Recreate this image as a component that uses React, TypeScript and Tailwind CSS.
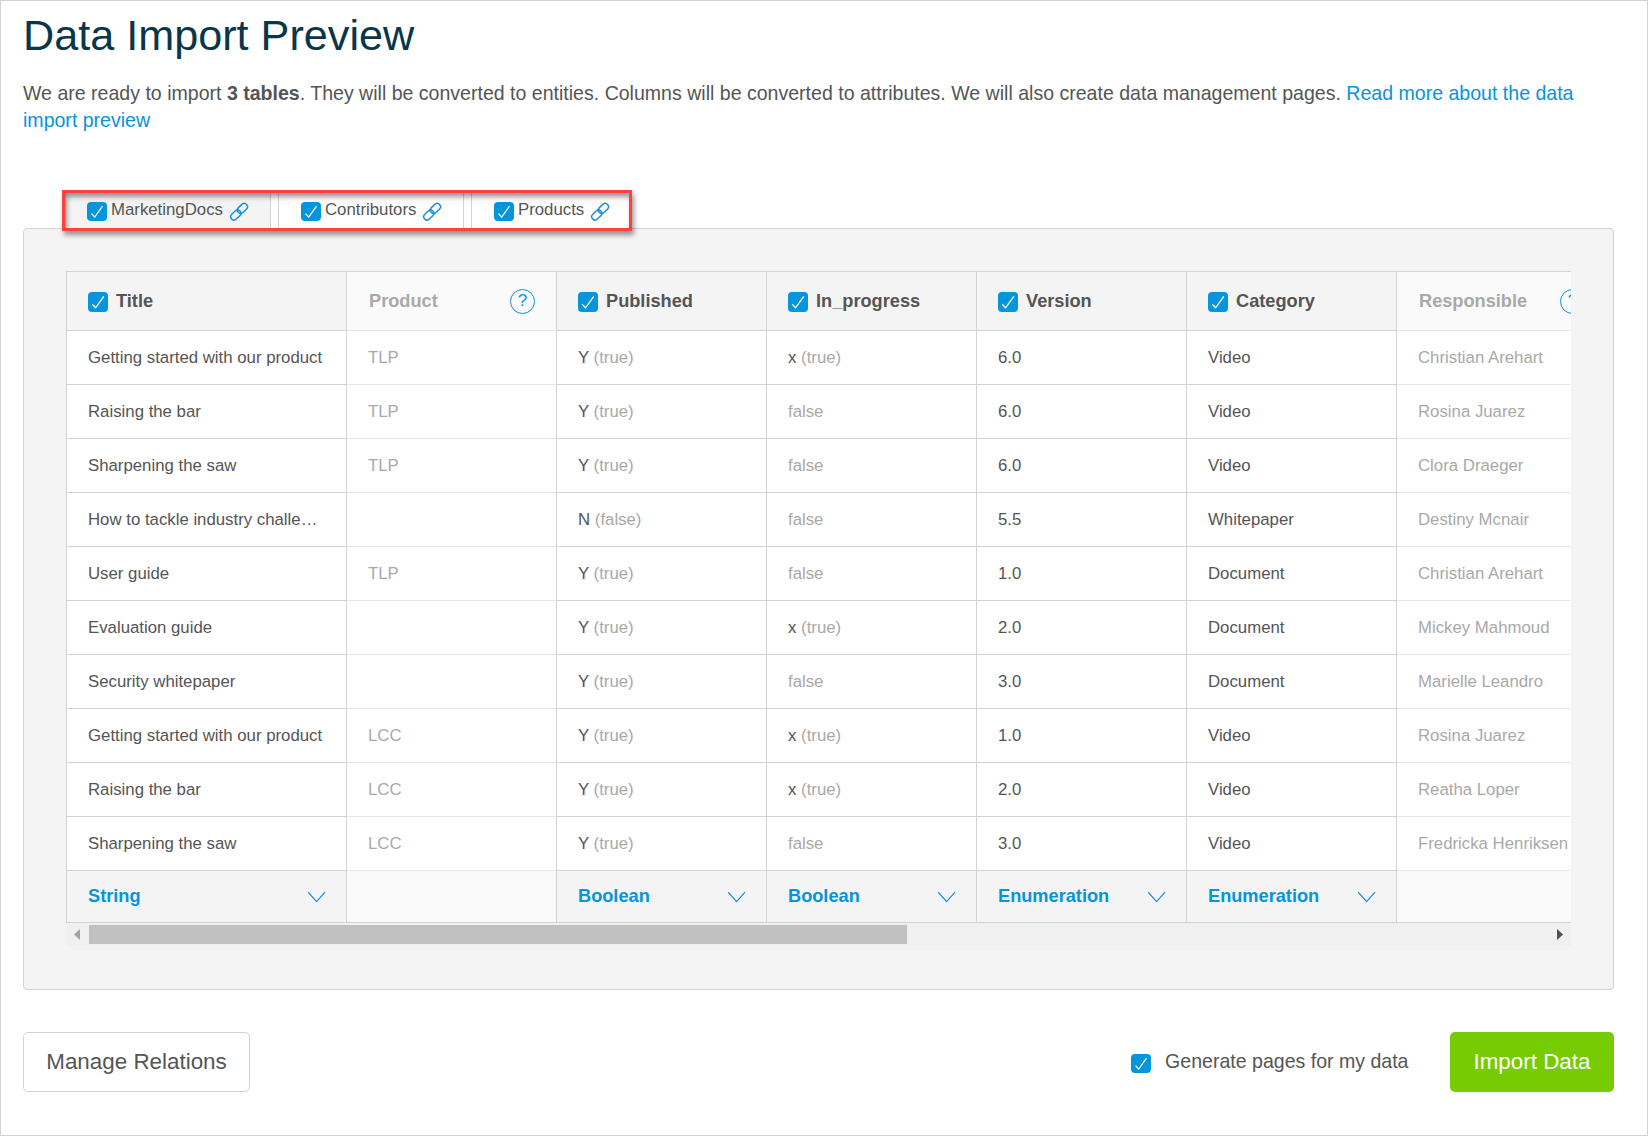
import React from "react";

type Cell = string | [string, string];

const columns = [
  { name: "Title", type: "String", on: true },
  { name: "Product", type: "", on: false },
  { name: "Published", type: "Boolean", on: true },
  { name: "In_progress", type: "Boolean", on: true },
  { name: "Version", type: "Enumeration", on: true },
  { name: "Category", type: "Enumeration", on: true },
  { name: "Responsible", type: "", on: false },
];

const Y: Cell = ["Y", "(true)"];
const N: Cell = ["N", "(false)"];
const X: Cell = ["x", "(true)"];
const F: Cell = ["", "false"];

const rows: Cell[][] = [
  ["Getting started with our product", "TLP", Y, X, "6.0", "Video", "Christian Arehart"],
  ["Raising the bar", "TLP", Y, F, "6.0", "Video", "Rosina Juarez"],
  ["Sharpening the saw", "TLP", Y, F, "6.0", "Video", "Clora Draeger"],
  ["How to tackle industry challe…", "", N, F, "5.5", "Whitepaper", "Destiny Mcnair"],
  ["User guide", "TLP", Y, F, "1.0", "Document", "Christian Arehart"],
  ["Evaluation guide", "", Y, X, "2.0", "Document", "Mickey Mahmoud"],
  ["Security whitepaper", "", Y, F, "3.0", "Document", "Marielle Leandro"],
  ["Getting started with our product", "LCC", Y, X, "1.0", "Video", "Rosina Juarez"],
  ["Raising the bar", "LCC", Y, X, "2.0", "Video", "Reatha Loper"],
  ["Sharpening the saw", "LCC", Y, F, "3.0", "Video", "Fredricka Henriksen"],
];

const GRID = "grid w-[1540px] grid-cols-[280px_repeat(6,210px)]";

function Check({ className = "" }: { className?: string }) {
  return (
    <span className={`block w-5 shrink-0 rounded-[4px] bg-[#0595db] ${className}`}>
      <svg viewBox="0 0 20 20" className="block h-full w-full" fill="none" stroke="#fff" strokeWidth="1.3">
        <path d="M4.2 12.2 7.6 15.8 15.8 4.4" />
      </svg>
    </span>
  );
}

function LinkIcon() {
  return (
    <svg width="20" height="20" viewBox="0 0 20 20" fill="none" stroke="#1a8fdb" strokeWidth="1.5">
      <rect x="-5.7" y="-3.3" width="11.4" height="6.6" rx="3.3" transform="translate(13.4 6.4) rotate(-43)" />
      <rect x="-5.7" y="-3.3" width="11.4" height="6.6" rx="3.3" transform="translate(6.8 13) rotate(-43)" />
    </svg>
  );
}

function Help() {
  return (
    <span className="flex size-[25px] shrink-0 items-center justify-center rounded-full border border-[#0595db] pb-[2px] text-[17px] leading-none text-[#0595db]">
      ?
    </span>
  );
}

function Chevron() {
  return (
    <svg className="mt-px" width="18" height="12" viewBox="0 0 18 12" fill="none" stroke="#1a8fdb" strokeWidth="1.2">
      <path d="M.2 1.2 8.600 10.600 17 1.200" />
    </svg>
  );
}

function Tab({ label, className }: { label: string; className: string }) {
  return (
    <div className={`flex h-[37px] border-x border-t border-[#d3d3d3] ${className}`}>
      <Check className="mt-[10px] h-[19px]" />
      <span className="ml-[4px] mt-[6px] text-[16.8px] leading-6">{label}</span>
      <span className="ml-[6px] mt-[10px]">
        <LinkIcon />
      </span>
    </div>
  );
}

function Value({ cell }: { cell: Cell }) {
  if (typeof cell === "string") return <>{cell}</>;
  return (
    <>
      {cell[0]}
      {cell[0] && " "}
      <span className="text-[#a9a9a9]">{cell[1]}</span>
    </>
  );
}

export default function App() {
  return (
    <div className="h-[1136px] w-[1648px] overflow-hidden border border-[#d3d3d3] bg-white pl-[22px] pr-[33px] font-['Liberation_Sans',Arial,sans-serif] text-[#555]">
      <h1 className="mt-[9px] h-[50px] text-[43.2px] leading-[50px] text-[#0a3649]">Data Import Preview</h1>
      <p className="mt-[20px] h-[54px] text-[19.56px] leading-[27px]">
        We are ready to import <b>3 tables</b>. They will be converted to entities. Columns will be converted to
        attributes. We will also create data management pages.{" "}
        <a className="text-[#0595db]">Read more about the data import preview</a>
      </p>

      <div className="relative z-10 ml-[39px] mt-[56px] flex h-[41px] w-[570px] pl-[3px] pt-px">
        <Tab label="MarketingDocs" className="w-[206px] bg-[#f4f4f4] pl-[21px]" />
        <Tab label="Contributors" className="ml-[7px] w-[186px] bg-white pl-[22px]" />
        <Tab label="Products" className="ml-[7px] w-[159px] bg-white pl-[22px]" />
        <div className="absolute inset-0 border-[3px] border-[#fc4141] shadow-[2px_4px_5px_rgba(0,0,0,0.4),inset_2px_4px_5px_rgba(0,0,0,0.4)]" />
      </div>

      <div className="-mt-[3px] h-[762px] w-[1591px] rounded-[4px] border border-[#d3d3d3] bg-[#f4f4f4] pl-[42px] pt-[42px]">
        <div className="h-[652px] w-[1505px] overflow-hidden border-l border-t border-[#d3d3d3]">
          <div className={`${GRID} h-[59px]`}>
            {columns.map((c) => (
              <div
                key={c.name}
                className={`flex items-center border-b border-r border-r-[#d3d3d3] text-[18.2px] font-bold leading-6 ${
                  c.on ? "border-b-[#d3d3d3] bg-[#f4f4f4] pl-[21px]" : "border-b-[#e8e8e8] bg-[#fafafa] pl-[22px] pr-[21px] text-[#a9a9a9]"
                }`}
              >
                {c.on && <Check className="mr-2 mt-[2px] h-5" />}
                <span className="flex-1">{c.name}</span>
                {!c.on && (
                  <span className="mt-px font-normal">
                    <Help />
                  </span>
                )}
              </div>
            ))}
          </div>
          {rows.map((row, r) => (
            <div key={r} className={`${GRID} h-[54px]`}>
              {row.map((cell, c) => (
                <div
                  key={c}
                  className={`whitespace-nowrap border-b border-r border-r-[#d3d3d3] bg-white pl-[21px] text-[16.8px] leading-[53px] ${
                    columns[c].on ? "border-b-[#d3d3d3]" : "border-b-[#e8e8e8] text-[#a9a9a9]"
                  }`}
                >
                  <Value cell={cell} />
                </div>
              ))}
            </div>
          ))}
          <div className={`${GRID} h-[52px]`}>
            {columns.map((c) => (
              <div
                key={c.name}
                className={`flex items-center justify-between border-b border-r border-[#d3d3d3] pb-px pl-[21px] pr-5 text-[18.2px] font-bold leading-6 text-[#0595db] ${
                  c.on ? "bg-[#f4f4f4]" : "bg-[#fafafa]"
                }`}
              >
                {c.type && <span className="-mt-px">{c.type}</span>}
                {c.type && <Chevron />}
              </div>
            ))}
          </div>
        </div>
        <div className="flex h-[23px] w-[1505px] items-center bg-[#f0f0f0] pl-2 pr-2">
          <svg width="6" height="11" viewBox="0 0 6 11" fill="#a3a3a3">
            <path d="M6 0v11L0 5.5z" />
          </svg>
          <div className="ml-[9px] h-[19px] w-[818px] bg-[#c1c1c1]" />
          <svg className="ml-auto" width="6" height="11" viewBox="0 0 6 11" fill="#505050">
            <path d="M0 0v11l6-5.5z" />
          </svg>
        </div>
      </div>

      <div className="mt-[42px] flex h-[60px] w-[1591px] items-center">
        <button className="h-[60px] w-[227px] rounded-[5px] border border-[#d3d3d3] bg-white text-[22.4px]">Manage Relations</button>
        <label className="ml-auto mr-[41.500px] flex items-center text-[19.56px]">
          <Check className="mr-[14px] mt-[3px] h-[19px]" />
          Generate pages for my data
        </label>
        <button className="h-[60px] w-[164px] rounded-[5px] bg-[#76cb02] text-[22.4px] text-white">Import Data</button>
      </div>
    </div>
  );
}
